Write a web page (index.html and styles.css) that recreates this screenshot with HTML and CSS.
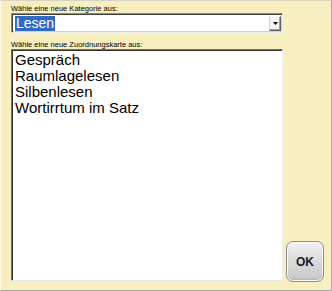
FILE: index.html
```html
<!DOCTYPE html>
<html>
<head>
<meta charset="utf-8">
<link rel="stylesheet" href="styles.css">
</head>
<body>
<div class="window">
  <div class="label">Wähle eine neue Kategorie aus:</div>
  <div class="combo">
    <div class="combo-field"><span class="sel">Lesen</span></div>
    <div class="combo-btn">
      <svg width="5" height="3" viewBox="0 0 5 3"><path d="M0 0h5L2.5 3z" fill="#000"/></svg>
    </div>
  </div>
  <div class="label label2">Wähle eine neue Zuordnungskarte aus:</div>
  <div class="main">
    <ul class="listbox">
      <li>Gespräch</li>
      <li>Raumlagelesen</li>
      <li>Silbenlesen</li>
      <li>Wortirrtum im Satz</li>
    </ul>
    <div class="side">
      <button class="ok">OK</button>
    </div>
  </div>
</div>
</body>
</html>
```

FILE: styles.css
```css
html, body {
  margin: 0;
  padding: 0;
  background: #f7efc0;
}
.window {
  width: 332px;
  height: 291px;
  box-sizing: border-box;
  background: #f7efc0;
  border-top: 1px solid #d8d4c4;
  border-left: 1px solid #fbf7e4;
  border-right: 1px solid #a8a8a0;
  border-bottom: 1px solid #a8a8a0;
  padding: 3px 0 0 10px;
  display: flex;
  flex-direction: column;
  font-family: "Liberation Sans", Arial, sans-serif;
}
.label {
  font-size: 7.5px;
  line-height: 9px;
  height: 9px;
  color: #000;
  white-space: nowrap;
}
.label2 {
  margin-top: 7px;
}
.combo {
  width: 272px;
  height: 20px;
  box-sizing: border-box;
  display: flex;
  background: #fff;
  border-top: 1px solid #8a8a8a;
  border-left: 1px solid #8a8a8a;
  border-right: 1px solid #f0f0f0;
  border-bottom: 1px solid #f0f0f0;
  box-shadow: inset 1px 1px 0 #404040, inset -1px -1px 0 #d4d0c8;
}
.combo-field {
  flex: 1;
  padding: 2px 0 0 3px;
  display: flex;
  align-items: flex-start;
}
.sel {
  background: #316ac5;
  color: #fff;
  font-size: 14px;
  line-height: 15px;
  height: 15px;
  padding: 0 1px;
}
.combo-btn {
  width: 10px;
  margin: 2px 1px 1px 0;
  background: #f4f4f4;
  border-left: 1px solid #d0d0d0;
  border-top: 1px solid #fff;
  border-right: 1px solid #606060;
  border-bottom: 1px solid #606060;
  box-shadow: inset -1px -1px 0 #a0a0a0;
  display: flex;
  align-items: center;
  justify-content: center;
}
.combo-btn svg {
  display: block;
}
.main {
  display: flex;
  flex: 1;
  min-height: 0;
  padding-bottom: 9px;
}
.listbox {
  list-style: none;
  margin: 0;
  width: 272px;
  height: 232px;
  box-sizing: border-box;
  background: #fff;
  border-top: 1px solid #707070;
  border-left: 1px solid #707070;
  border-right: 1px solid #f0f0f0;
  border-bottom: 1px solid #e4e4f0;
  box-shadow: inset 1px 1px 0 #303030;
  padding: 2px 0 0 3px;
  font-size: 15px;
  line-height: 16px;
  color: #000;
}
.listbox li {
  white-space: nowrap;
}
.side {
  display: flex;
  align-items: flex-end;
  padding-left: 3px;
}
.ok {
  width: 38px;
  height: 41px;
  margin-bottom: -1px;
  box-sizing: border-box;
  border: 1px solid #8c8c8c;
  border-radius: 7px;
  background: linear-gradient(#f2f2f2 0%, #dcdcdc 45%, #c8c8c8 100%);
  box-shadow: inset 0 0 0 1px #fafafa, inset 0 -2px 2px #b0b0b0;
  font-family: "Liberation Sans", Arial, sans-serif;
  font-weight: bold;
  font-size: 12px;
  color: #1a1a1a;
  padding: 0;
}
```
